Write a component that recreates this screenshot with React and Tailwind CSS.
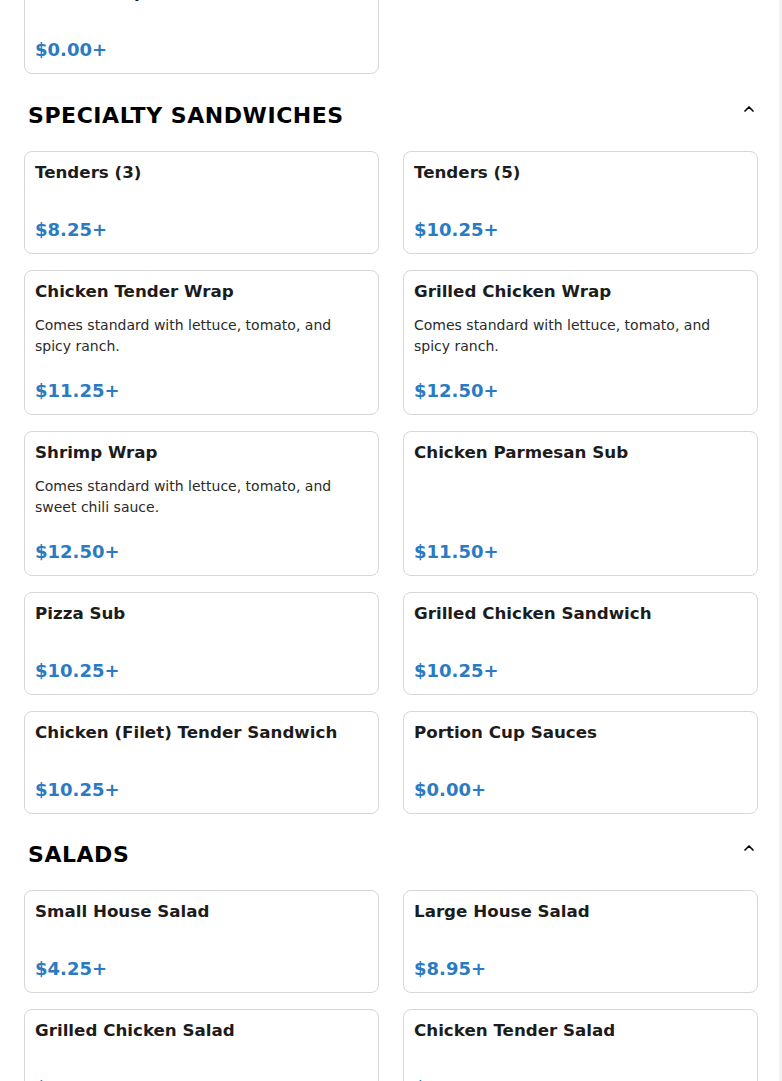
import { ChevronUp } from 'lucide-react';

const sections = [
  {
    title: null,
    items: [{ name: 'Portion Cup Sauces', price: '$0.00+' }],
  },
  {
    title: 'SPECIALTY SANDWICHES',
    spacing: 'mt-6',
    items: [
      { name: 'Tenders (3)', price: '$8.25+' },
      { name: 'Tenders (5)', price: '$10.25+' },
      { name: 'Chicken Tender Wrap', desc: 'Comes standard with lettuce, tomato, and spicy ranch.', price: '$11.25+' },
      { name: 'Grilled Chicken Wrap', desc: 'Comes standard with lettuce, tomato, and spicy ranch.', price: '$12.50+' },
      { name: 'Shrimp Wrap', desc: 'Comes standard with lettuce, tomato, and sweet chili sauce.', price: '$12.50+' },
      { name: 'Chicken Parmesan Sub', price: '$11.50+' },
      { name: 'Pizza Sub', price: '$10.25+' },
      { name: 'Grilled Chicken Sandwich', price: '$10.25+' },
      { name: 'Chicken (Filet) Tender Sandwich', price: '$10.25+' },
      { name: 'Portion Cup Sauces', price: '$0.00+' },
    ],
  },
  {
    title: 'SALADS',
    spacing: 'mt-[23px]',
    items: [
      { name: 'Small House Salad', price: '$4.25+' },
      { name: 'Large House Salad', price: '$8.95+' },
      { name: 'Grilled Chicken Salad', price: '$10.50+' },
      { name: 'Chicken Tender Salad', price: '$10.50+' },
    ],
  },
];

function ItemCard({ item }) {
  return (
    <div className="flex min-h-[103px] flex-col rounded-lg border border-[#d6d6d6] bg-white p-[10px]">
      <h3 className="text-[16.7px] leading-5 font-bold text-[#1c1c1c]">{item.name}</h3>
      {item.desc && (
        <p className="mt-[14px] pr-8 text-sm leading-[21px] text-[#2a2a2a]">{item.desc}</p>
      )}
      <div className="mt-auto pt-[21px] text-lg leading-[26px] font-bold text-[#2b7bc2]">{item.price}</div>
    </div>
  );
}

export default function App() {
  return (
    <div className="relative min-h-screen overflow-hidden bg-white font-['DejaVu_Sans',sans-serif]">
      <div className="-mt-[29px] px-6 pb-10">
        {sections.map((section, i) => (
          <section key={i} className={section.spacing}>
            {section.title && (
              <div className="mb-[17px] flex items-start justify-between pl-1">
                <h2 className="text-[22px] leading-9 font-bold tracking-wide text-black">{section.title}</h2>
                <ChevronUp size={16} strokeWidth={2.5} className="mt-[3px] mr-[1px] text-black" />
              </div>
            )}
            <div className="grid grid-cols-2 gap-x-6 gap-y-4">
              {section.items.map((item) => (
                <ItemCard key={item.name + item.price} item={item} />
              ))}
            </div>
          </section>
        ))}
      </div>
      <div className="fixed top-0 right-0 h-full w-[3px] bg-[#f3f3f3]" />
    </div>
  );
}
